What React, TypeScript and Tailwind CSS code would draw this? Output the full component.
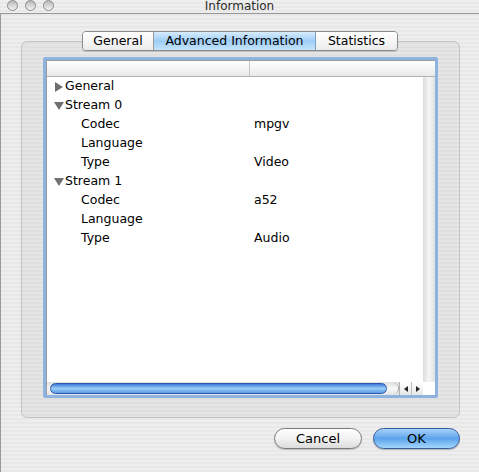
import React from 'react';

const stripes =
  'bg-[repeating-linear-gradient(180deg,#eeeeee_0px,#eeeeee_2px,#e8e8e8_2px,#e8e8e8_4px)]';

type Row = { label: string; value?: string; level: 0 | 1; open?: boolean };

const rows: Row[] = [
  { label: 'General', level: 0, open: false },
  { label: 'Stream 0', level: 0, open: true },
  { label: 'Codec', value: 'mpgv', level: 1 },
  { label: 'Language', level: 1 },
  { label: 'Type', value: 'Video', level: 1 },
  { label: 'Stream 1', level: 0, open: true },
  { label: 'Codec', value: 'a52', level: 1 },
  { label: 'Language', level: 1 },
  { label: 'Type', value: 'Audio', level: 1 },
];

function Disclosure({ open }: { open?: boolean }) {
  return (
    <svg width="10" height="10" viewBox="0 0 10 10" className="shrink-0">
      {open ? (
        <polygon points="0,1 10,1 5,9" fill="#707070" />
      ) : (
        <polygon points="1,0 9,5 1,10" fill="#707070" />
      )}
    </svg>
  );
}

function Light() {
  return (
    <div className="w-[11px] h-[11px] rounded-full border border-[#8c8c8c] bg-gradient-to-b from-[#b9b9b9] to-[#f4f4f4]" />
  );
}

export default function App() {
  return (
    <div
      className={`w-[479px] h-[472px] overflow-hidden flex flex-col ${stripes} text-black`}
      style={{ fontFamily: '"DejaVu Sans", "Liberation Sans", sans-serif' }}
    >
      {/* title bar */}
      <div className="h-[14px] shrink-0 relative flex items-start border-b border-[#969696]">
        <div className="flex gap-[7px] pl-[7px]">
          <Light />
          <Light />
          <Light />
        </div>
        <div className="absolute inset-x-0 top-0 text-center text-[12px] leading-[13px] text-[#2a2a2a]">
          Information
        </div>
      </div>

      <div className="flex-1 flex flex-col border-l border-[#9a9a9a]">
        {/* tabs */}
        <div className="relative z-10 mt-[17px] flex justify-center text-[12.5px] leading-[18px]">
          <div className="flex h-[20px] rounded-[4px] border border-[#8a8a8a] overflow-hidden shadow-[0_1px_1px_rgba(0,0,0,0.15)]">
            <div className="w-[71px] text-center bg-gradient-to-b from-white to-[#ececec] border-r border-[#9a9a9a]">
              General
            </div>
            <div className="w-[162px] text-center bg-gradient-to-b from-[#d8ecfd] via-[#9dcdf5] to-[#c6e4fb] border-r border-[#7d9fc6]">
              Advanced Information
            </div>
            <div className="w-[81px] text-center bg-gradient-to-b from-white to-[#ececec]">
              Statistics
            </div>
          </div>
        </div>

        {/* group box */}
        <div className="ml-[20px] mr-[19px] -mt-[10px] h-[377px] rounded-[6px] border border-[#c2c2c2] bg-black/[0.035] px-[21px] pt-[15px]">
          <div className="h-[341px] rounded-[2px] border-[3px] border-[#8fb3e0] bg-white flex flex-col">
            <div className="flex-1 flex min-h-0">
              <div className="flex-1 flex flex-col border-l border-t border-[#9a9a9a]">
                {/* header */}
                <div className="h-[16px] flex border-b border-[#b2b2b2] bg-gradient-to-b from-white to-[#e9e9e9]">
                  <div className="w-[203px] border-r border-[#c6c6c6]" />
                  <div className="flex-1" />
                </div>
                {/* rows */}
                <div className="text-[12.5px]">
                  {rows.map((r, i) => (
                    <div key={i} className="h-[19px] flex items-center">
                      <div className="w-[207px] flex items-center">
                        {r.level === 0 ? (
                          <div className="flex items-center pl-[7px]">
                            <Disclosure open={r.open} />
                            <span className="ml-[1px]">{r.label}</span>
                          </div>
                        ) : (
                          <span className="pl-[34px]">{r.label}</span>
                        )}
                      </div>
                      <span>{r.value}</span>
                    </div>
                  ))}
                </div>
              </div>
              {/* vertical scroller track */}
              <div className="w-[12px] flex flex-col border-t border-[#9a9a9a]">
                <div className="h-[16px] border-b border-[#b2b2b2] bg-gradient-to-b from-white to-[#e9e9e9]" />
                <div className="flex-1 bg-gradient-to-r from-[#dcdcdc] via-[#f6f6f6] to-[#e2e2e2]" />
              </div>
            </div>
            {/* horizontal scroller */}
            <div className="h-[13px] flex items-center border-l border-[#9a9a9a]">
              <div className="flex-1 h-[13px] flex items-center pl-[3px] bg-gradient-to-b from-[#dedede] via-[#f7f7f7] to-[#e4e4e4]">
                <div className="w-[337px] h-[11px] rounded-full border border-[#2c57a8] bg-gradient-to-b from-[#3f7bd6] via-[#9bcdf8] to-[#5a9ae6]" />
                <div className="w-[12px] h-[11px] rounded-r-full border-r border-[#a8a8a8]" />
              </div>
              <div className="w-[24px] h-[13px] flex bg-gradient-to-b from-white to-[#e6e6e6] border-l border-[#b0b0b0]">
                <div className="flex-1 flex items-center justify-center border-r border-[#c0c0c0]">
                  <svg width="4" height="6" viewBox="0 0 4 6">
                    <polygon points="4,0 0,3 4,6" fill="#222" />
                  </svg>
                </div>
                <div className="flex-1 flex items-center justify-center">
                  <svg width="4" height="6" viewBox="0 0 4 6">
                    <polygon points="0,0 4,3 0,6" fill="#222" />
                  </svg>
                </div>
              </div>
              <div className="w-[12px] h-[13px] bg-white" />
            </div>
          </div>
        </div>

        {/* buttons */}
        <div className="mt-[10px] mr-[19px] flex justify-end gap-[11px] text-[13px]">
          <div className="w-[88px] h-[21px] rounded-full border border-[#7a7a7a] bg-gradient-to-b from-white via-[#f2f2f2] to-[#dcdcdc] flex items-center justify-center shadow-[0_1px_1px_rgba(0,0,0,0.2)]">
            Cancel
          </div>
          <div className="w-[87px] h-[21px] rounded-full border border-[#355b9b] bg-gradient-to-b from-[#a8d2f8] via-[#5ba3ec] to-[#a4d6fc] flex items-center justify-center shadow-[0_1px_1px_rgba(0,0,0,0.25)]">
            OK
          </div>
        </div>
      </div>
    </div>
  );
}
